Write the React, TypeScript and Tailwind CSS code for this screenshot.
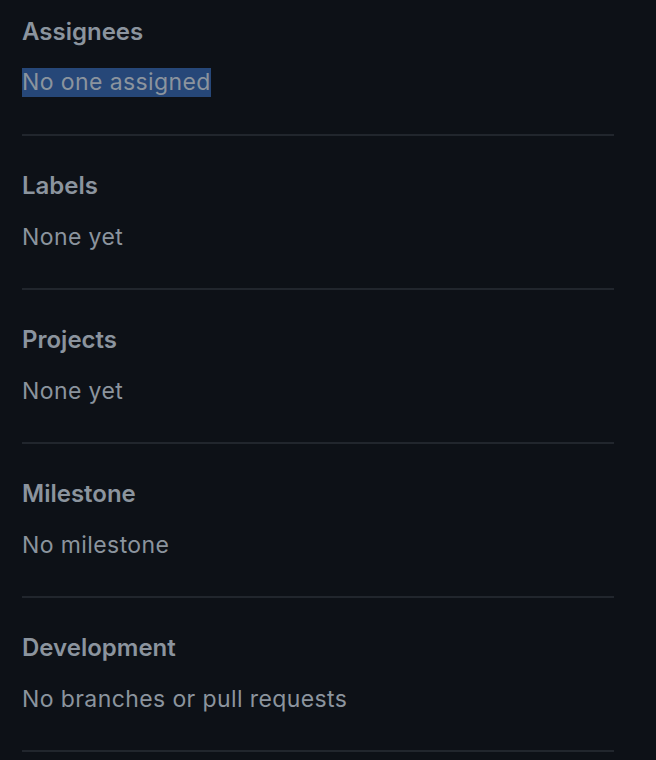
import React from "react";

const sections = [
  { title: "Assignees", text: "No one assigned", selected: true },
  { title: "Labels", text: "None yet" },
  { title: "Projects", text: "None yet" },
  { title: "Milestone", text: "No milestone" },
  { title: "Development", text: "No branches or pull requests" },
];

export default function App() {
  return (
    <div
      className="min-h-[760px] w-[656px] bg-[#0d1117] px-[22px] text-[#8b949e]"
      style={{ fontFamily: "Inter, 'Noto Sans', sans-serif" }}
    >
      <div className="w-[592px]">
        {sections.map((s, i) => (
          <div
            key={s.title}
            className={`border-b-2 border-[#21262d] ${i === 0 ? "pt-[17px] pb-[36px]" : "pt-[35px] pb-[35px]"}`}
          >
            <div className="text-[24px] leading-[30px] font-semibold">{s.title}</div>
            <div className={`${i === 0 ? "mt-[21px]" : "mt-[22px]"} text-[23px] leading-[29px] tracking-[0.4px] pb-[1px]`}>
              {s.selected ? (
                <span className="inline-block bg-[#264778]">{s.text}</span>
              ) : (
                s.text
              )}
            </div>
          </div>
        ))}
      </div>
    </div>
  );
}
